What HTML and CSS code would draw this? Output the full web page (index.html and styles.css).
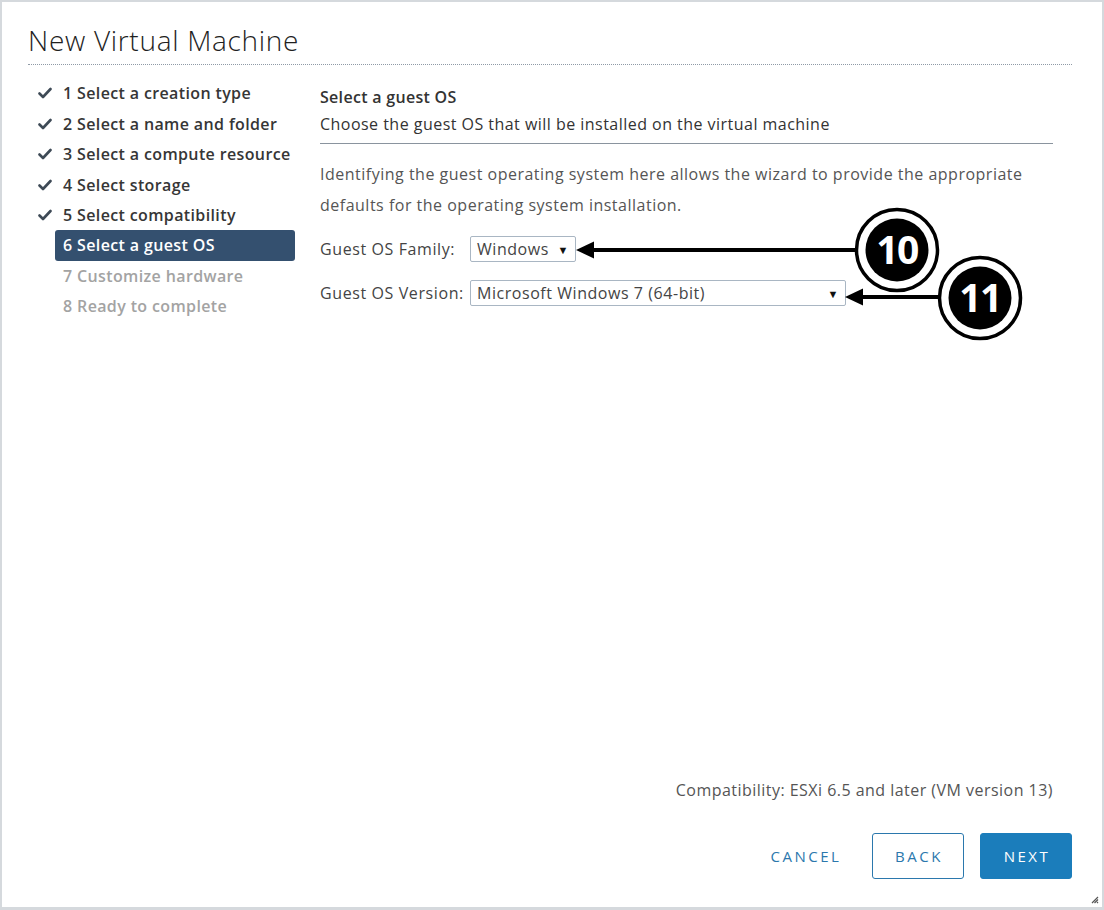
FILE: index.html
```html
<!DOCTYPE html>
<html>
<head>
<meta charset="utf-8">
<link rel="stylesheet" href="styles.css">
</head>
<body>
<div class="dialog">
  <header class="dlg-header">
    <h1 class="dlg-title">New Virtual Machine</h1>
  </header>
  <div class="dlg-body">
    <nav class="steps">
      <div class="step done"><svg class="check" viewBox="0 0 14 12"><path d="M1.5 6.5 L5 10 L12.5 2" fill="none" stroke="#3e4a56" stroke-width="2.6" stroke-linecap="round" stroke-linejoin="round"/></svg><span>1 Select a creation type</span></div>
      <div class="step done"><svg class="check" viewBox="0 0 14 12"><path d="M1.5 6.5 L5 10 L12.5 2" fill="none" stroke="#3e4a56" stroke-width="2.6" stroke-linecap="round" stroke-linejoin="round"/></svg><span>2 Select a name and folder</span></div>
      <div class="step done"><svg class="check" viewBox="0 0 14 12"><path d="M1.5 6.5 L5 10 L12.5 2" fill="none" stroke="#3e4a56" stroke-width="2.6" stroke-linecap="round" stroke-linejoin="round"/></svg><span>3 Select a compute resource</span></div>
      <div class="step done"><svg class="check" viewBox="0 0 14 12"><path d="M1.5 6.5 L5 10 L12.5 2" fill="none" stroke="#3e4a56" stroke-width="2.6" stroke-linecap="round" stroke-linejoin="round"/></svg><span>4 Select storage</span></div>
      <div class="step done"><svg class="check" viewBox="0 0 14 12"><path d="M1.5 6.5 L5 10 L12.5 2" fill="none" stroke="#3e4a56" stroke-width="2.6" stroke-linecap="round" stroke-linejoin="round"/></svg><span>5 Select compatibility</span></div>
      <div class="step active"><span>6 Select a guest OS</span></div>
      <div class="step todo"><span>7 Customize hardware</span></div>
      <div class="step todo"><span>8 Ready to complete</span></div>
    </nav>
    <main class="content">
      <div class="content-head">
        <div class="content-title">Select a guest OS</div>
        <div class="content-sub">Choose the guest OS that will be installed on the virtual machine</div>
      </div>
      <p class="desc">Identifying the guest operating system here allows the wizard to provide the appropriate defaults for the operating system installation.</p>
      <div class="form-row row-family">
        <label class="flabel">Guest OS Family:</label>
        <div class="select sel-family"><span>Windows</span><span class="caret">&#9660;</span></div>
      </div>
      <div class="form-row row-version">
        <label class="flabel">Guest OS Version:</label>
        <div class="select sel-version"><span>Microsoft Windows 7 (64-bit)</span><span class="caret">&#9660;</span></div>
      </div>
    </main>
  </div>
  <footer class="dlg-footer">
    <div class="compat">Compatibility: ESXi 6.5 and later (VM version 13)</div>
    <div class="buttons">
      <button class="btn btn-link">CANCEL</button>
      <button class="btn btn-outline">BACK</button>
      <button class="btn btn-primary">NEXT</button>
    </div>
  </footer>
  <svg class="grip" viewBox="0 0 10 10"><path d="M9 3 L3 9 M9 5.5 L5.5 9 M9 8 L8 9" stroke="#555" stroke-width="1.2"/></svg>

  <svg class="callouts" width="1104" height="910" viewBox="0 0 1104 910">
    <line x1="590" y1="250" x2="856" y2="250" stroke="#000" stroke-width="4"/>
    <polygon points="576,250 594,241.5 594,258.5" fill="#000"/>
    <circle cx="897" cy="250" r="40.5" fill="#fff" stroke="#000" stroke-width="3.5"/>
    <circle cx="897" cy="250" r="31.5" fill="#000"/>
    <text x="897" y="264" text-anchor="middle" class="callout-num">10</text>
    <line x1="860" y1="297" x2="940" y2="297" stroke="#000" stroke-width="4"/>
    <polygon points="845,297 863,288.5 863,305.5" fill="#000"/>
    <circle cx="980" cy="298" r="40.5" fill="#fff" stroke="#000" stroke-width="3.5"/>
    <circle cx="980" cy="298" r="31.5" fill="#000"/>
    <text x="980" y="312" text-anchor="middle" class="callout-num">11</text>
  </svg>
</div>
</body>
</html>
```
FILE: styles.css
```css
* { box-sizing: border-box; }
html, body { margin: 0; padding: 0; background: #fff; }
body { font-family: "Open Sans", "Liberation Sans", sans-serif; color: #333; }

.dialog {
  position: relative;
  width: 1104px;
  height: 910px;
  border: 2px solid #d5d9dd;
  border-bottom-width: 3px;
  background: #fff;
  display: flex;
  flex-direction: column;
}

.dlg-header {
  margin: 0 30px 0 26px;
  padding-top: 22px;
  padding-bottom: 8px;
  border-bottom: 1px dotted #8f9aa6;
}
.dlg-title {
  margin: 0;
  font-size: 28px;
  font-weight: 300;
  line-height: 32px;
  color: #1f1f1f;
  letter-spacing: 0.7px;
}

.dlg-body {
  display: flex;
  flex: 1;
  padding-top: 13px;
}

.steps {
  width: 294px;
  padding-left: 34px;
  display: flex;
  flex-direction: column;
}
.step {
  height: 30.45px;
  display: flex;
  align-items: center;
  font-size: 16px;
  font-weight: 600;
  color: #363636;
  letter-spacing: 0.37px;
  padding-left: 27px;
  position: relative;
  white-space: nowrap;
}
.step.done { padding-left: 2px; }
.step .check { width: 14px; height: 12px; flex: none; margin-right: 11px; }
.step.active {
  background: #34506f;
  color: #fff;
  margin-left: 19px;
  width: 240px;
  padding-left: 8px;
  border-radius: 3px;
}
.step.todo { color: #a3a3a3; }

.content {
  flex: 0 0 733px;
  margin-left: 24px;
  display: flex;
  flex-direction: column;
}
.content-head {
  border-bottom: 1px solid #8a949e;
  padding-bottom: 8px;
  margin-top: 8px;
}
.content-title {
  font-size: 16px;
  font-weight: 600;
  color: #333;
  line-height: 22px;
  letter-spacing: 0.3px;
}
.content-sub {
  font-size: 16px;
  color: #333;
  line-height: 22px;
  margin-top: 5px;
  letter-spacing: 0.47px;
}
.desc {
  margin: 15px 0 0 0;
  font-size: 16px;
  line-height: 31px;
  color: #555;
  letter-spacing: 0.5px;
  width: 733px;
}
.form-row {
  display: flex;
  align-items: center;
}
.row-family { margin-top: 15px; height: 26px; }
.row-version { margin-top: 18px; height: 26px; }
.flabel {
  font-size: 16px;
  color: #444;
  letter-spacing: 0.6px;
  width: 150px;
  white-space: nowrap;
}
.select {
  height: 26px;
  border: 1px solid #a9b6c3;
  border-radius: 2px;
  display: flex;
  align-items: center;
  justify-content: space-between;
  padding: 0 6px 0 6px;
  font-size: 16px;
  color: #444;
  letter-spacing: 0.55px;
  white-space: nowrap;
}
.sel-family { width: 106px; }
.sel-version { width: 376px; }
.caret { font-size: 11px; color: #111; }

.dlg-footer {
  padding: 0 30px 28px 0;
  display: flex;
  flex-direction: column;
  align-items: flex-end;
}
.compat {
  font-size: 16px;
  color: #555;
  margin-right: 19px;
  letter-spacing: 0.47px;
}
.buttons {
  display: flex;
  align-items: center;
  margin-top: 32px;
  gap: 16px;
}
.btn {
  height: 46px;
  width: 92px;
  border-radius: 3px;
  font-family: "Open Sans", "Liberation Sans", sans-serif;
  font-size: 15px;
  letter-spacing: 2.5px;
  font-weight: 500;
  background: #fff;
  color: #2b78ad;
  border: 1px solid #2b78ad;
  padding: 0 0 0 2px;
  text-align: center;
}
.btn-link { border-color: transparent; margin-right: 5px; }
.btn-primary { background: #1b7dbb; border-color: #1b7dbb; color: #fff; }

.grip {
  position: absolute;
  right: 3px;
  bottom: 3px;
  width: 10px;
  height: 10px;
}

.callouts {
  position: absolute;
  left: -2px;
  top: -2px;
  pointer-events: none;
}
.callout-num {
  font-family: "Open Sans", "Liberation Sans", sans-serif;
  font-weight: 700;
  font-size: 39px;
  fill: #fff;
  letter-spacing: -1.5px;
}
```
